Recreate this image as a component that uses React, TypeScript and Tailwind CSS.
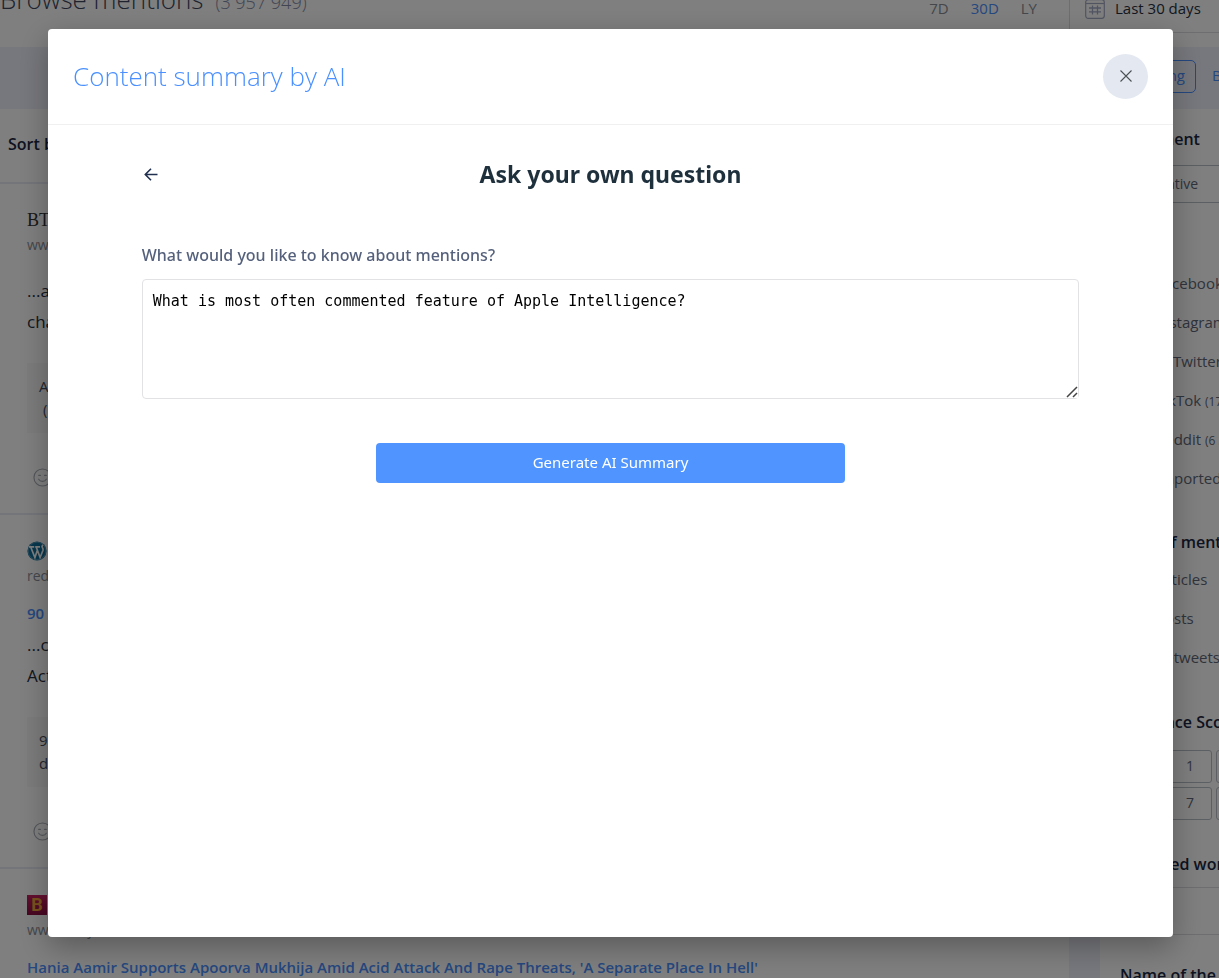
import React, { useState } from 'react';

interface Mention {
  logo: React.ReactNode;
  url: string;
  title?: string;
  lines: string[];
  quote: string[];
}

const SOURCES = [
  { name: 'Facebook', count: '(24 106)' },
  { name: 'Instagram', count: '(18 240)' },
  { name: 'X (Twitter)', count: '(980 112)' },
  { name: 'TikTok', count: '(17 402)' },
  { name: 'Reddit', count: '(6 318)' },
  { name: 'Imported', count: '(0)' },
];

const TYPES = ['Articles', 'Posts', 'Retweets'];

const SCORES = [
  ['0', '1', '2'],
  ['6', '7', '8'],
];

function WordpressLogo() {
  return (
    <svg viewBox="0 0 20 20" className="h-5 w-5" aria-hidden="true">
      <circle cx="10" cy="10" r="9.6" fill="#0f6f9c" />
      <circle cx="10" cy="10" r="8.8" fill="none" stroke="#8fbdd2" strokeWidth="0.5" />
      <path
        d="M2 5.800h5.200M3.700 6l4.200 10.500 2.300-6.800M8.200 5.800h4.800M9.200 6l3.900 10.500 2.900-7.200c.5-1.700-1-2.600-.9-3.900 0-.8.5-1.300 1.200-1.400"
        fill="none"
        stroke="#fff"
        strokeWidth="1.7"
      />
    </svg>
  );
}

function Smiley() {
  return (
    <svg viewBox="0 0 20 20" className="h-[19px] w-[19px]" fill="none" stroke="#a9adb5" strokeWidth="1.2" aria-hidden="true">
      <circle cx="10" cy="10" r="9" />
      <path d="M6 7.8h1.800M12.200 7.8H14M6 11.800c1.600 3 6.400 3 8 0" strokeLinecap="round" />
    </svg>
  );
}

function CalendarIcon() {
  return (
    <svg viewBox="0 0 20 20" className="h-5 w-5" fill="none" stroke="#a3abc4" aria-hidden="true">
      <rect x="0.7" y="0.7" width="18.6" height="18.6" rx="2.5" strokeWidth="1.2" />
      <path d="M1 4.500h18" strokeWidth="1.2" />
      <path d="M4 9h12M4 12.800h12M7.500 6.500v9M12.500 6.500v9" strokeWidth="1.3" />
    </svg>
  );
}

const MENTIONS: Mention[] = [
  {
    logo: <span className="block font-['Liberation_Serif',serif] text-lg leading-5 text-[#333]">BT</span>,
    url: 'www.bt.com',
    lines: ['...artificial', 'changes'],
    quote: ['Apple', ' (iOS)'],
  },
  {
    logo: <WordpressLogo />,
    url: 'redmond.com',
    title: '90 Day',
    lines: ['...connected', 'Actions'],
    quote: ['90', 'day'],
  },
  {
    logo: (
      <span className="flex h-5 w-5 items-center justify-center bg-gradient-to-b from-[#c8205f] to-[#8f0e42] font-['Roboto',sans-serif] text-lg leading-5 font-bold text-[#f0a53a]">
        B
      </span>
    ),
    url: 'www.bollywoodlife.com',
    title: "Hania Aamir Supports Apoorva Mukhija Amid Acid Attack And Rape Threats, 'A Separate Place In Hell'",
    lines: ['...called', 'After'],
    quote: ['Hania', 'Aamir'],
  },
];

function MentionCard({ mention }: { mention: Mention }) {
  return (
    <article className="border-b-2 border-[#e9ebf6] pt-[26px] pb-[26px] pl-[27px]">
      <div className="h-5">{mention.logo}</div>
      <div className="mt-[5px] text-sm leading-5 text-[#8b909b]">{mention.url}</div>
      {mention.title ? (
        <h3 className="mt-[15px] mb-1 text-[15px] leading-6 font-semibold whitespace-nowrap text-[#4a90ff]">
          <a href="#mention">{mention.title}</a>
        </h3>
      ) : (
        <div className="h-5" />
      )}
      <p className="text-[17px] leading-[31px] text-[#26303f]">
        {mention.lines.map((line) => (
          <span key={line} className="block">{line}</span>
        ))}
      </p>
      <div className="mt-[26px] bg-[#f9f9f9] px-3 py-3 text-[15px] leading-[23px] whitespace-pre text-[#454e5e]">
        {mention.quote.map((line) => (
          <div key={line}>{line}</div>
        ))}
      </div>
      <div className="mt-[35px] pl-[6px]">
        <Smiley />
      </div>
    </article>
  );
}

function CheckList({ children }: { children: React.ReactNode }) {
  return (
    <label className="flex h-[39px] items-center gap-[18px] text-[15px] whitespace-nowrap text-[#5f6878]">
      <input type="checkbox" className="h-[18px] w-[18px] shrink-0" />
      <span>{children}</span>
    </label>
  );
}

function SideHeading({ children }: { children: React.ReactNode }) {
  return <h2 className="text-base leading-6 font-semibold whitespace-nowrap text-[#1b2742]">{children}</h2>;
}

function Sidebar() {
  return (
    <aside className="w-[150px] shrink-0 overflow-hidden border-l-[31px] border-[#eff1fb] pt-[18px]">
      <div className="pl-5">
        <SideHeading>Sentiment</SideHeading>
        <button type="button" className="mt-[14px] h-[38px] w-full border-y border-[#b9bfc6] text-sm text-[#5f6878]">
          Negative
        </button>
        <div className="mt-[61px]">
          {SOURCES.map((s) => (
            <CheckList key={s.name}>
              {s.name} <span className="text-xs">{s.count}</span>
            </CheckList>
          ))}
        </div>
        <div className="mt-8 mb-[6px]">
          <SideHeading>Type of mentions</SideHeading>
        </div>
        {TYPES.map((t) => (
          <CheckList key={t}>{t}</CheckList>
        ))}
        <div className="mt-[33px]">
          <SideHeading>Influence Score</SideHeading>
        </div>
        <div className="mt-4 flex flex-col gap-1">
          {SCORES.map((row) => (
            <div key={row[0]} className="flex gap-1">
              {row.map((n) => (
                <button
                  key={n}
                  type="button"
                  className="h-[33px] w-11 shrink-0 rounded-[3px] border border-[#b9bfc6] pb-px text-sm text-[#5f6878]"
                >
                  {n}
                </button>
              ))}
            </div>
          ))}
        </div>
        <div className="mt-8">
          <SideHeading>Excluded words</SideHeading>
        </div>
      </div>
      <input type="text" aria-label="Excluded words" className="mt-[11px] h-12 w-full border-y border-[#dcdce0]" />
      <div className="mt-7 pl-5">
        <SideHeading>Name of the author</SideHeading>
      </div>
    </aside>
  );
}

function MentionsPage() {
  return (
    <div className="-mt-[15px] flex flex-col bg-white">
      <header className="flex h-12">
        <div className="flex items-baseline gap-3 self-start leading-7">
          <h1 className="text-[26px] leading-7 font-light text-[#3c465c]">Browse mentions</h1>
          <span className="text-lg leading-7 font-light text-[#8289a6]">(3 957 949)</span>
        </div>
        <nav className="mr-8 ml-auto flex items-center gap-[22px] pb-px text-[15px] text-[#8c8f96]">
          <a href="#7d">7D</a>
          <a href="#30d" className="text-[#4a90ff]">30D</a>
          <a href="#ly">LY</a>
        </nav>
        <div className="flex w-[150px] items-center gap-[10px] border-b border-l border-[#dcdce0] pl-[15px] text-[15px] whitespace-nowrap text-[#26303f]">
          <CalendarIcon />
          Last 30 days
        </div>
      </header>
      <div className="mt-[14px] flex h-[62px] items-center justify-end gap-4 overflow-hidden bg-[#eff1fb] pb-1 text-[15px] text-[#4a90ff]">
        <button type="button" className="h-[33px] rounded-[5px] border border-[#4a90ff] px-[10px] pb-px">Trending</button>
        <a href="#basic" className="w-[7px] pb-[2px]">Basic</a>
      </div>
      <div className="flex">
        <main className="min-w-0 flex-1">
          <div className="border-b-2 border-[#e9ebf6] pt-[23px] pb-[26px] pl-2">
            <SideHeading>Sort by</SideHeading>
          </div>
          {MENTIONS.map((m) => (
            <MentionCard key={m.url} mention={m} />
          ))}
        </main>
        <Sidebar />
      </div>
    </div>
  );
}

function SummaryModal({ onClose }: { onClose: () => void }) {
  const [question, setQuestion] = useState('What is most often commented feature of Apple Intelligence?');

  return (
    <div className="fixed inset-0 flex bg-black/50 pt-[29px] pr-[46px] pb-[41px] pl-12">
      <div
        role="dialog"
        aria-modal="true"
        aria-labelledby="summary-title"
        className="flex flex-1 flex-col rounded-[4px] bg-white shadow-[0_10px_30px_rgba(0,0,0,0.3)]"
      >
        <div className="flex h-24 items-center justify-between border-b border-[#f0f0f0] px-[25px]">
          <h2 id="summary-title" className="text-[26px] font-light text-[#4a90ff]">Content summary by AI</h2>
          <button
            type="button"
            aria-label="Close"
            onClick={onClose}
            className="flex h-[45px] w-[45px] items-center justify-center rounded-full bg-[#e4e9f1] pb-px"
          >
            <svg viewBox="0 0 12 12" className="h-3 w-3" fill="none" stroke="#4b4f56" strokeWidth="1.1">
              <path d="M0.5 0.5l11 11M11.500 0.5l-11 11" />
            </svg>
          </button>
        </div>

        <div className="mx-auto w-5/6 pt-[33px] font-['Noto_Sans',sans-serif]">
          <div className="grid grid-cols-[18px_1fr_18px] items-center">
            <button type="button" aria-label="Back" className="flex justify-center">
              <svg viewBox="0 0 14 14" className="h-[14px] w-[14px]" fill="none" stroke="#22304f" strokeWidth="1.6">
                <path d="M13.500 7.500H1.500M7 1.700L1.300 7.500 7 13.300" />
              </svg>
            </button>
            <h3 className="text-center text-[23px] leading-8 font-bold text-[#1f303d]">Ask your own question</h3>
          </div>
          <label htmlFor="question" className="mt-[53px] block text-base leading-6 font-medium text-[#55617c]">
            What would you like to know about mentions?
          </label>
          <div className="relative mt-3">
            <textarea
              id="question"
              value={question}
              onChange={(e) => setQuestion(e.target.value)}
              className="block h-[120px] w-full rounded-[4px] border border-[#e2e2e5] px-[10px] py-[10px] font-['DejaVu_Sans_Mono',monospace] text-[15px] leading-[22px] text-black outline-none"
            />
            {/* resize grip drawn over the native one */}
            <svg
              viewBox="0 0 12 12"
              className="pointer-events-none absolute right-px bottom-px h-3 w-3 bg-white"
              fill="none"
              stroke="#444"
              strokeWidth="1.5"
              aria-hidden="true"
            >
              <path d="M1 11L11 1M7 11l4-4" />
            </svg>
          </div>
          <button type="button" className="mx-auto mt-11 block h-10 w-1/2 rounded-[4px] bg-[#4f94ff] pb-px text-[15px] text-white">
            Generate AI Summary
          </button>
        </div>
      </div>
    </div>
  );
}

export default function App() {
  const [open, setOpen] = useState(true);

  return (
    <div className="h-screen overflow-hidden font-['Open_Sans',sans-serif]">
      <MentionsPage />
      {open && <SummaryModal onClose={() => setOpen(false)} />}
    </div>
  );
}
